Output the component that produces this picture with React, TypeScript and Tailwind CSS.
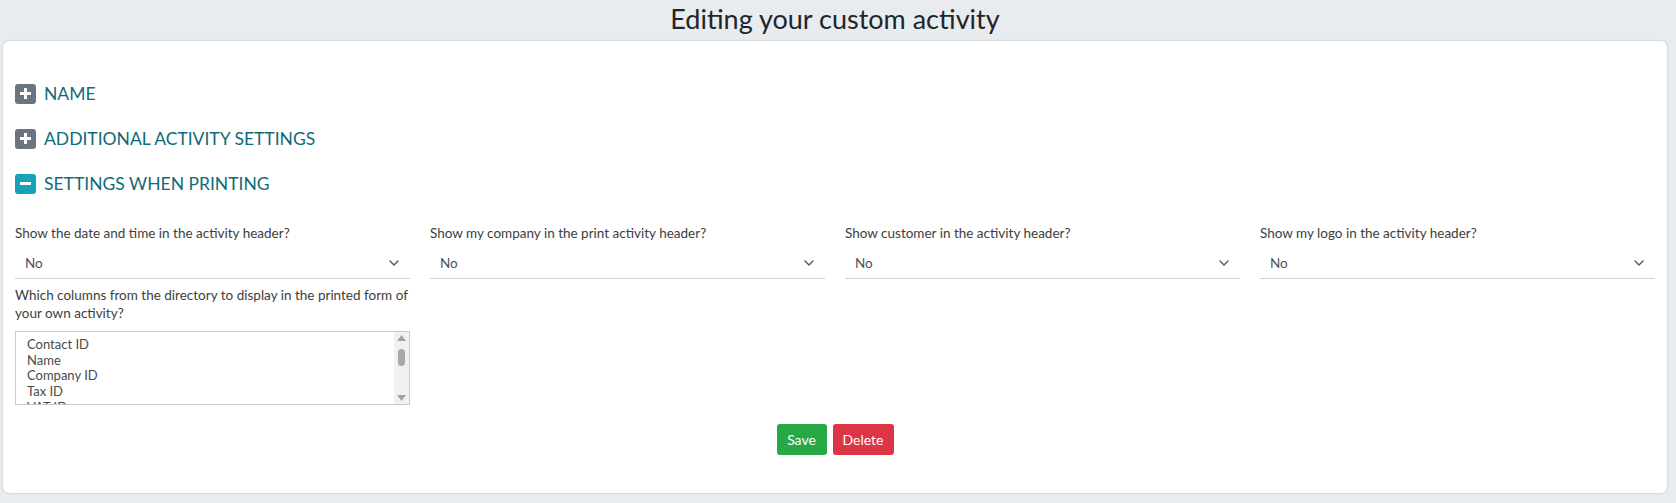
import React from 'react';

const font = { fontFamily: 'Lato, "Open Sans", Arial, sans-serif' };

function Chevron() {
  return (
    <svg width="10" height="6" viewBox="0 0 10 6" fill="none">
      <path d="M1 1l4 4 4-4" stroke="#555" strokeWidth="1.4" strokeLinecap="round" strokeLinejoin="round" />
    </svg>
  );
}

function SectionToggle({ title, open }: { title: string; open?: boolean }) {
  return (
    <div className="flex h-[45px] items-center">
      <span
        className={`flex h-[20px] w-[21px] items-center justify-center rounded-[3px] ${
          open ? 'bg-[#17a2b8]' : 'bg-[#6c757d]'
        }`}
      >
        <svg width="11" height="11" viewBox="0 0 11 11">
          <rect x="0" y="4" width="11" height="3" fill="#fff" />
          {!open && <rect x="4" y="0" width="3" height="11" fill="#fff" />}
        </svg>
      </span>
      <span className="ml-[8px] text-[17.5px] leading-none text-[#0f6b78]">{title}</span>
    </div>
  );
}

function SelectField({ label }: { label: string }) {
  return (
    <div>
      <div className="mb-[2px] text-[13.5px] leading-[20px] text-[#3d3d3d]">{label}</div>
      <div className="flex h-[34px] items-center justify-between border-b border-[#ced4da] pl-[10px] pr-[11px] pt-[3px]">
        <span className="text-[13.5px] text-[#495057]">No</span>
        <Chevron />
      </div>
    </div>
  );
}

const columns = ['Contact ID', 'Name', 'Company ID', 'Tax ID', 'VAT ID'];

export default function App() {
  return (
    <div className="min-h-screen bg-[#e9ecef] pb-[10px]" style={font}>
      <div className="flex h-[41px] items-center justify-center pb-[5px] pr-[6px]">
        <h3 className="text-[27px] leading-none text-[#212529]">Editing your custom activity</h3>
      </div>

      <div className="ml-[3px] mr-[9px] rounded-[6px] bg-white px-[12px] pb-[38px] pt-[30px] shadow-[0_0_2px_rgba(0,0,0,0.25)]">
        <SectionToggle title="NAME" />
        <SectionToggle title="ADDITIONAL ACTIVITY SETTINGS" />
        <SectionToggle title="SETTINGS WHEN PRINTING" open />

        <div className="mt-[17px] grid grid-cols-4 gap-x-[20px]">
          <SelectField label="Show the date and time in the activity header?" />
          <SelectField label="Show my company in the print activity header?" />
          <SelectField label="Show customer in the activity header?" />
          <SelectField label="Show my logo in the activity header?" />

          <div className="mt-[7px]">
            <div className="mb-[9px] text-[13.5px] leading-[18px] text-[#3d3d3d]">
              Which columns from the directory to display in the printed form of your own activity?
            </div>
            <div className="flex h-[74px] border border-[#c8ccd1]">
              <div className="flex-1 overflow-hidden pl-[11px] pt-[5px]">
                {columns.map((c) => (
                  <div key={c} className="text-[13px] leading-[15.7px] text-[#4a4a4a]">
                    {c}
                  </div>
                ))}
              </div>
              <div className="flex w-[15px] flex-col items-center justify-between bg-[#f1f1f1] py-[3px]">
                <svg width="9" height="6" viewBox="0 0 9 6">
                  <path d="M4.5 0L9 6H0z" fill="#a3a3a3" />
                </svg>
                <div className="-mt-[22px] h-[17px] w-[7px] rounded-full bg-[#a8a8a8]" />
                <svg width="9" height="6" viewBox="0 0 9 6">
                  <path d="M0 0h9L4.5 6z" fill="#a3a3a3" />
                </svg>
              </div>
            </div>
          </div>
        </div>

        <div className="mt-[19px] flex justify-center gap-[6px]">
          <button className="h-[31px] w-[50px] rounded-[3px] bg-[#28a745] text-[14px] text-white">Save</button>
          <button className="h-[31px] w-[61px] rounded-[3px] bg-[#dc3545] text-[14px] text-white">Delete</button>
        </div>
      </div>
    </div>
  );
}
